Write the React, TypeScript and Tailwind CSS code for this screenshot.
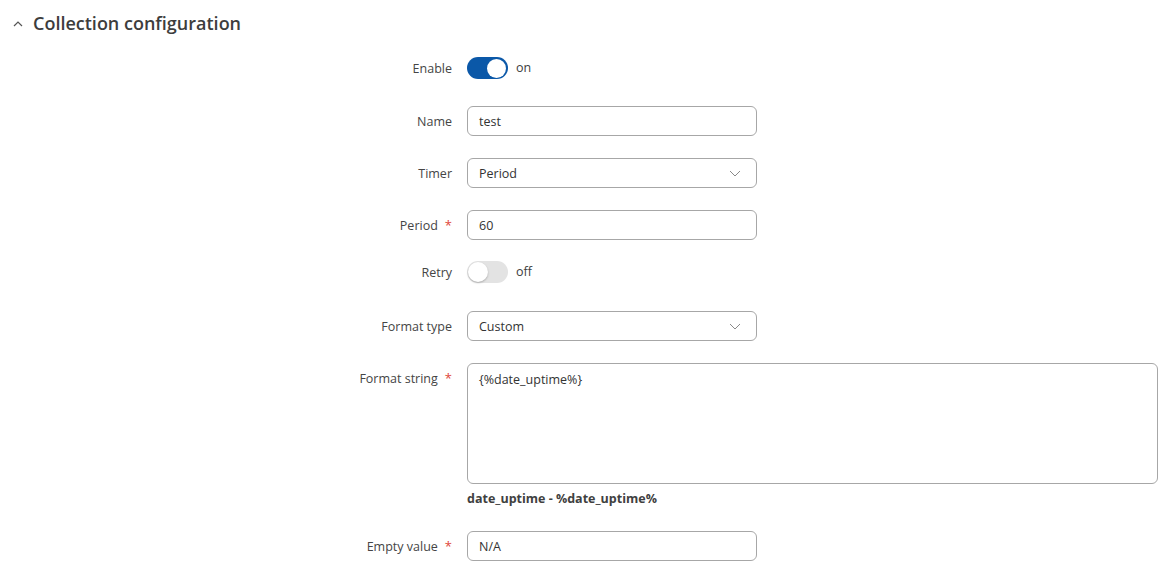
import React from "react";

const font = { fontFamily: '"Open Sans", "Noto Sans", sans-serif' };

function Label({ text, required }: { text: string; required?: boolean }) {
  return (
    <div className="w-[452px] shrink-0 flex justify-end items-center h-[30px] pt-[2px] text-[12.5px] text-[#454545]">
      <span>{text}</span>
      {required && <span className="ml-[7px] text-[#e0453a] text-[13px] leading-none relative top-[-1px]">*</span>}
    </div>
  );
}

function Toggle({ on }: { on: boolean }) {
  return (
    <div className="flex items-center h-[30px]">
      <div
        className={
          on
            ? "w-[41px] h-[22px] rounded-full bg-[#0b58a8] flex items-center justify-end pr-[2px]"
            : "w-[41px] h-[22px] rounded-full bg-[#e3e3e3] flex items-center justify-start pl-[1px]"
        }
      >
        <div
          className={
            on
              ? "w-[19px] h-[19px] rounded-full bg-white"
              : "w-[20px] h-[20px] rounded-full bg-white shadow-[0_1px_2px_rgba(0,0,0,0.25)]"
          }
        />
      </div>
      <span className="ml-[8px] pt-[1px] text-[12.5px] text-[#404040]">{on ? "on" : "off"}</span>
    </div>
  );
}

function Input({ value }: { value: string }) {
  return (
    <div className="w-[290px] h-[30px] rounded-[6px] border border-[#a7a7a7] flex items-center pl-[11px] pt-[2px] text-[12.5px] text-[#333]">
      {value}
    </div>
  );
}

function Select({ value }: { value: string }) {
  return (
    <div className="w-[290px] h-[30px] rounded-[6px] border border-[#a7a7a7] flex items-center justify-between pl-[11px] pr-[15px] text-[12.5px] text-[#333]">
      <span className="pt-[2px]">{value}</span>
      <svg width="12" height="7" viewBox="0 0 12 7" fill="none">
        <path d="M1 1 L6 6 L11 1" stroke="#8a8a8a" strokeWidth="1" />
      </svg>
    </div>
  );
}

export default function App() {
  return (
    <div className="w-[1169px] h-[577px] bg-white overflow-hidden" style={font}>
      <div className="flex items-center h-[46px] pl-[13px]">
        <svg width="10" height="7" viewBox="0 0 10 7" fill="none" className="mr-[10px]">
          <path d="M1 6 L5 2 L9 6" stroke="#555" strokeWidth="1.2" />
        </svg>
        <span className="text-[18px] font-semibold text-[#3d3d3d]">Collection configuration</span>
      </div>
      <div className="flex flex-col pt-[7px]">
        <div className="flex gap-[15px]">
          <Label text="Enable" />
          <Toggle on />
        </div>
        <div className="flex gap-[15px] mt-[23px]">
          <Label text="Name" />
          <Input value="test" />
        </div>
        <div className="flex gap-[15px] mt-[22px]">
          <Label text="Timer" />
          <Select value="Period" />
        </div>
        <div className="flex gap-[15px] mt-[22px]">
          <Label text="Period" required />
          <Input value="60" />
        </div>
        <div className="flex gap-[15px] mt-[17px]">
          <Label text="Retry" />
          <Toggle on={false} />
        </div>
        <div className="flex gap-[15px] mt-[24px]">
          <Label text="Format type" />
          <Select value="Custom" />
        </div>
        <div className="flex gap-[15px] mt-[22px] items-start">
          <Label text="Format string" required />
          <div className="flex flex-col">
            <div className="w-[691px] h-[121px] rounded-[6px] border border-[#a7a7a7] pl-[11px] pt-[7px] text-[12.5px] text-[#333]">
              {"{%date_uptime%}"}
            </div>
            <div className="mt-[5px] pt-[1px] text-[12.5px] font-bold text-[#404040] leading-[18px]">
              date_uptime - %date_uptime%
            </div>
          </div>
        </div>
        <div className="flex gap-[15px] mt-[23px]">
          <Label text="Empty value" required />
          <Input value="N/A" />
        </div>
      </div>
    </div>
  );
}
